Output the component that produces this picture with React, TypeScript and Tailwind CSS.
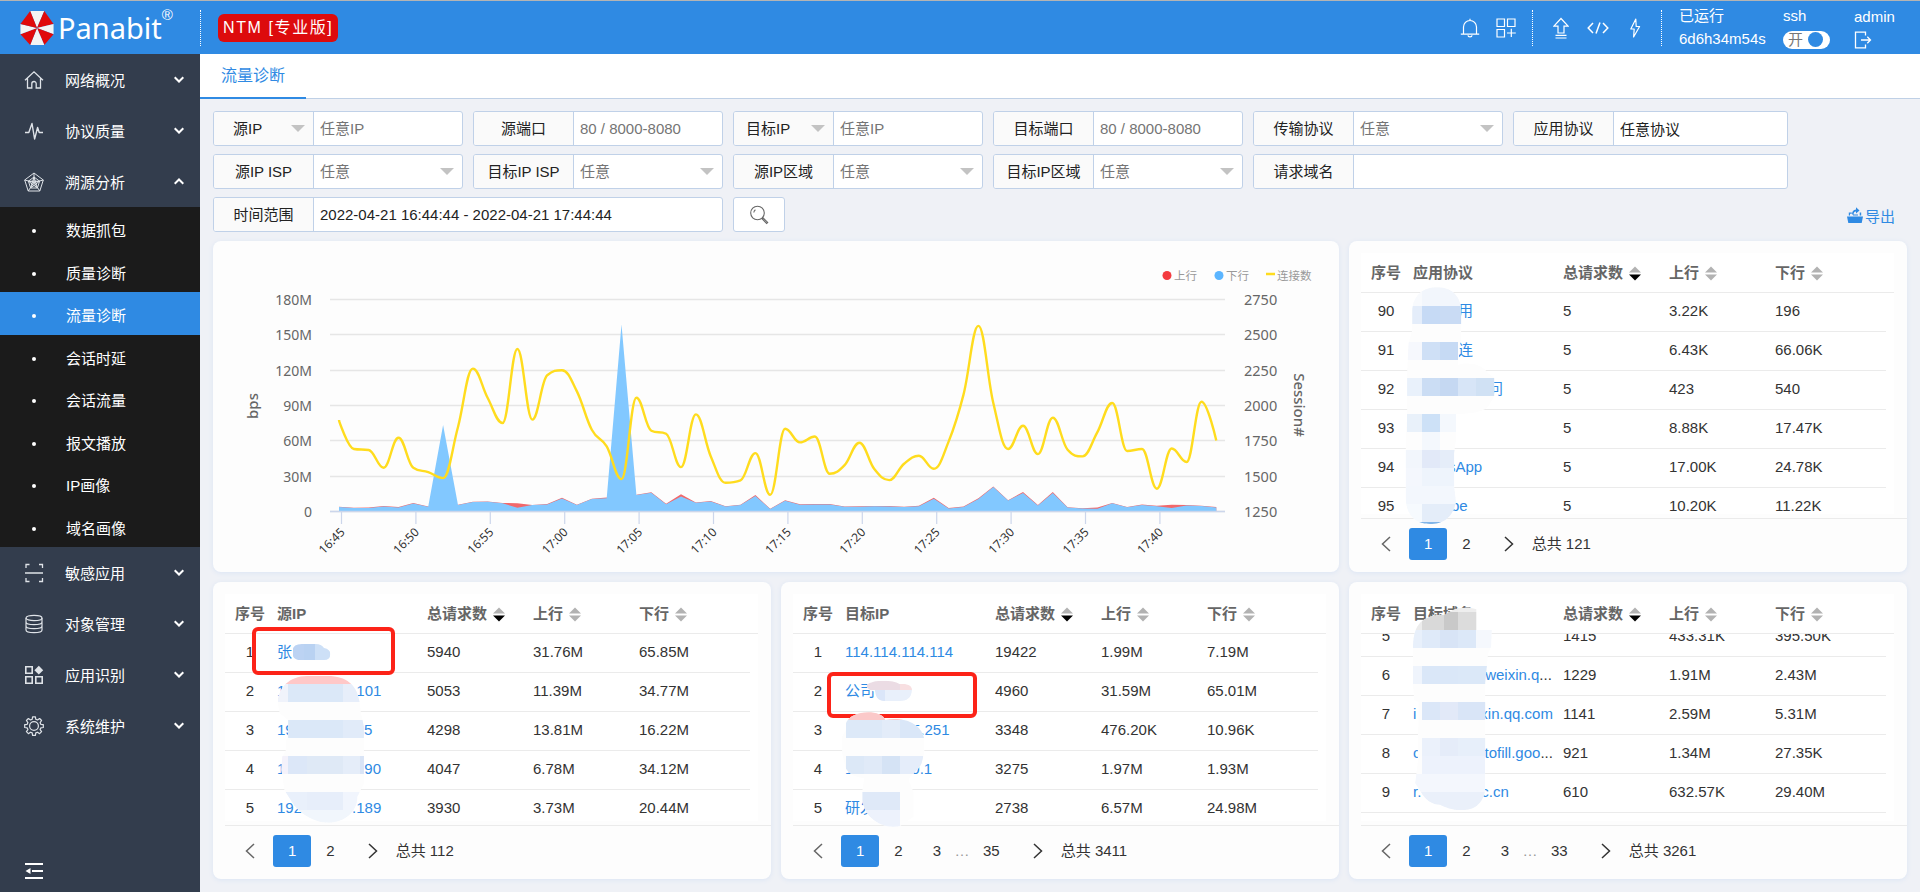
import { useEffect, useRef, type ReactNode } from 'react';

/* ---------- icons ---------- */

const line = { fill: 'none', stroke: 'currentColor' } as const;

function Logo() {
  const v = ['11,1', '25.5,1', '35,14.5', '35,25', '25.5,36', '11,36', '1,25', '1,14.5'];
  const fills = ['#f4f4f4', '#e0090b', '#f4f4f4', '#e0090b', '#f4f4f4', '#e0090b', '#f4f4f4', '#e0090b'];
  return (
    <svg viewBox="0 0 36 37" className="h-9 w-9" aria-hidden="true">
      {v.map((p, i) => (
        <polygon key={p} points={`18,18.5 ${p} ${v[(i + 1) % 8]}`} fill={fills[i]} />
      ))}
    </svg>
  );
}

const HomeIcon = () => (
  <svg viewBox="0 0 20 20" className="h-5 w-5" {...line} strokeWidth="1.3">
    <path d="M1 10.2 10 1.8l9 8.4M3.5 8.5V18h4.3v-4.3a2.2 2.2 0 0 1 4.4 0V18h4.3V8.5" />
  </svg>
);
const PulseIcon = () => (
  <svg viewBox="0 0 20 20" className="h-5 w-5" {...line} strokeWidth="1.4" strokeLinejoin="round">
    <path d="M1 11.5h3.8L8 2.5l2.6 15.5 3-11.5 1.6 5H19" />
  </svg>
);
const RadarIcon = () => (
  <svg viewBox="0 0 20 20" className="h-5 w-5" {...line} strokeWidth="1">
    <path d="M10 1 19.3 8 15.8 19H4.2L.7 8z" />
    <path d="M10 5 15.6 9.2 13.4 16H6.6L4.4 9.2z" />
    <path d="M10 1v9.5L.7 8M10 10.5 19.3 8M10 10.5 4.2 19M10 10.5l5.8 8.5M4.4 9.2h11.2M10 5l3.4 11-9-6.8M10 5 6.6 16l9-6.8" />
  </svg>
);
const ScanIcon = () => (
  <svg viewBox="0 0 20 20" className="h-5 w-5" {...line} strokeWidth="1.3">
    <path d="M2 5V1.5h3.5M15 1.5h3.5V5M18.500 15v3.500H15M5.500 18.500H2V15M1 10h18" />
  </svg>
);
const DatabaseIcon = () => (
  <svg viewBox="0 0 20 20" className="h-5 w-5" {...line} strokeWidth="1.2">
    <ellipse cx="10" cy="4" rx="8" ry="2.600" />
    <path d="M2 4v12c0 1.500 3.600 2.600 8 2.600s8-1.100 8-2.600V4M2 8c0 1.500 3.600 2.600 8 2.600S18 9.500 18 8M2 12c0 1.500 3.600 2.600 8 2.600s8-1.100 8-2.600" />
  </svg>
);
const AppsIcon = () => (
  <svg viewBox="0 0 20 20" className="h-5 w-5" {...line} strokeWidth="1.6">
    <path d="M1.800 1.800h6.400v6.400H1.800zM1.800 11.800h6.400v6.400H1.800zM11.800 11.800h6.400v6.400h-6.400z" />
    <path d="m14.800.8 4.400 4.400-4.400 4.400-4.400-4.400z" fill="currentColor" stroke="none" />
  </svg>
);
const GearIcon = () => (
  <svg viewBox="0 0 20 20" className="h-5 w-5" {...line} strokeWidth="1.200" strokeLinejoin="round">
    <circle cx="10" cy="10" r="4.400" />
    <path d="M8.600.8h2.800l.4 2.500 1.700.7 2.100-1.500 2 2-1.500 2.100.7 1.700 2.500.4v2.800l-2.500.4-.7 1.700 1.500 2.100-2 2-2.100-1.500-1.700.7-.4 2.500H8.600l-.4-2.500-1.700-.7-2.100 1.500-2-2 1.500-2.100-.7-1.700-2.500-.4V8.700l2.500-.4.7-1.700-1.500-2.100 2-2L6.500 4l1.700-.7z" />
  </svg>
);
const Chevron = ({ up }: { up?: boolean }) => (
  <svg viewBox="0 0 10 7" className="h-[7px] w-[10px]" {...line} strokeWidth="2">
    <path d={up ? 'M.7 5.800 5 1.500l4.300 4.300' : 'M.7 1.200 5 5.500l4.300-4.300'} />
  </svg>
);
const CollapseIcon = () => (
  <svg viewBox="0 0 18 16" className="h-4 w-[18px]" fill="currentColor">
    <path d="M0 0h18v2H0zM7 7h11v2H7zM0 14h18v2H0zM.5 8 5.500 5v6z" />
  </svg>
);
const BellIcon = () => (
  <svg viewBox="0 0 20 20" className="h-5 w-5" {...line} strokeWidth="1.200">
    <path d="M.8 16.200h18.400M3.500 16V9a6.500 6.500 0 0 1 13 0v7M10 2.500V.8M8 17.200a2 1.600 0 0 0 4 0" />
  </svg>
);
const WidgetsIcon = () => (
  <svg viewBox="0 0 20 20" className="h-5 w-5" {...line} strokeWidth="1.200">
    <path d="M1 1h7.500v7.500H1zM11.500 1H19v7.500h-7.500zM1 11.500h7.500V19H1zM15.300 10.800V19M11 15h8.800" />
  </svg>
);
const UploadIcon = () => (
  <svg viewBox="0 0 16 22" className="h-[22px] w-4" {...line} strokeWidth="1.200">
    <path d="M8 1.500.9 9.200H5V16h6V9.200h4.100zM2.500 18.300h11M2.500 21h11" />
  </svg>
);
const CodeIcon = () => (
  <svg viewBox="0 0 22 14" className="h-[14px] w-[22px]" {...line} strokeWidth="1.500">
    <path d="M6 2 1.200 7 6 12M16 2l4.800 5L16 12M13 1.500 9 12.500" />
  </svg>
);
const BoltIcon = () => (
  <svg viewBox="0 0 12 20" className="h-5 w-3" {...line} strokeWidth="1.200" strokeLinejoin="round">
    <path d="M6.800 1 1.800 11h3.400L4.600 19l6-10.500H7.200z" />
  </svg>
);
const LogoutIcon = () => (
  <svg viewBox="0 0 18 18" className="h-[18px] w-[18px]" {...line} strokeWidth="1.300">
    <path d="M11.500 4.500V1.200H1.500v15.600h10v-3.300M7 9h9.500M13.300 5.800 16.500 9l-3.200 3.200" />
  </svg>
);
const SearchIcon = () => (
  <svg viewBox="0 0 20 20" className="h-5 w-5" fill="none" stroke="#666" strokeWidth="1.100">
    <circle cx="8.500" cy="8" r="6.800" />
    <path d="M4.800 7.500a4 4 0 0 1 1.600-2.800M13 13.700l1-.9 4.700 4.600-1.100 1.100z" />
  </svg>
);
const ExportIcon = () => (
  <svg viewBox="0 0 16 16" className="h-4 w-4" fill="currentColor" aria-hidden="true">
    <path d="M0 9.500h16l-1.300 6.500H1.300zM1.800 8.500V5.500h3v1.200H3v1.800zM14.200 8.500V5.500h-1.500v3zM5 7.500c0-3 1.300-4.700 4-5V.3l3.500 3.200L9 6.500V4.600c-1.700.1-2.300 1.100-2.500 2.900zM6 8.500V7.400h5v1.100z" />
  </svg>
);

/* ---------- header ---------- */

const Divider = () => <span className="h-9 border-l border-dotted border-white" />;

function Header() {
  return (
    <header className="flex h-[54px] items-center border-t border-[#b4b4b4] bg-[#2f8ae3] text-white">
      <div className="flex w-[200px] items-center pl-[19px]">
        <Logo />
        <span className="pl-[3px] font-['Noto_Sans',sans-serif] text-[29px] leading-9">Panabit</span>
        <span className="self-start text-[15px] leading-[10px]">®</span>
      </div>
      <Divider />
      <span className="ml-[17px] flex h-7 items-center rounded-md bg-[#dd0b0d] px-[5px] text-[16px] tracking-widest">
        NTM [专业版]
      </span>
      <div className="ml-auto flex items-center">
        <button type="button" aria-label="通知"><BellIcon /></button>
        <button type="button" aria-label="组件" className="mr-4 ml-4"><WidgetsIcon /></button>
        <Divider />
        <button type="button" aria-label="升级" className="ml-5"><UploadIcon /></button>
        <button type="button" aria-label="代码" className="ml-[18px]"><CodeIcon /></button>
        <button type="button" aria-label="快捷" className="mr-5 ml-5"><BoltIcon /></button>
        <Divider />
        <div className="ml-[17px] w-[104px] pb-0.5 text-[15px] leading-[23px]">
          <div>已运行</div>
          <div>6d6h34m54s</div>
        </div>
        <div className="w-[71px] pb-0.5 text-[15px] leading-[22px]">
          <div id="ssh-label">ssh</div>
          <button
            type="button"
            role="switch"
            aria-checked="true"
            aria-labelledby="ssh-label"
            className="mt-1 flex h-[18px] w-[47px] items-center rounded-full bg-white pl-[5px] text-[15px] leading-[18px] text-[#777]"
          >
            开
            <span className="ml-[5px] h-[15px] w-[15px] rounded-full bg-[#2f8ae3]" />
          </button>
        </div>
        <div className="w-[66px] pb-0.5 text-[15px] leading-6">
          <div>admin</div>
          <button type="button" aria-label="退出" className="mt-0.5 block"><LogoutIcon /></button>
        </div>
      </div>
    </header>
  );
}

/* ---------- sidebar ---------- */

const subItems = ['数据抓包', '质量诊断', '流量诊断', '会话时延', '会话流量', '报文播放', 'IP画像', '域名画像'];

function MenuItem({ icon, label, open }: { icon: ReactNode; label: string; open?: boolean }) {
  return (
    <button type="button" aria-expanded={!!open} className="flex h-[51px] w-full items-center pr-4 pl-6 text-left text-[15px] text-white">
      <span className="text-[#dfe3e8]">{icon}</span>
      <span className="flex-1 pt-1 pl-[21px]">{label}</span>
      <Chevron up={open} />
    </button>
  );
}

function Sidebar() {
  return (
    <nav className="flex w-[200px] shrink-0 flex-col bg-[#333d4d]">
      <MenuItem icon={<HomeIcon />} label="网络概况" />
      <MenuItem icon={<PulseIcon />} label="协议质量" />
      <MenuItem icon={<RadarIcon />} label="溯源分析" open />
      <ul className="grid h-[340px] auto-rows-fr bg-[#1b1b1b] text-[15px] text-white">
        {subItems.map((s) => (
          <li key={s} className={s === '流量诊断' ? 'flex bg-[#2f8ae3]' : 'flex'}>
            <a href="#" className="flex flex-1 items-center pt-1.5 pl-8">
              <span className="h-1 w-1 rounded-full bg-white" />
              <span className="pl-[30px]">{s}</span>
            </a>
          </li>
        ))}
      </ul>
      <MenuItem icon={<ScanIcon />} label="敏感应用" />
      <MenuItem icon={<DatabaseIcon />} label="对象管理" />
      <MenuItem icon={<AppsIcon />} label="应用识别" />
      <MenuItem icon={<GearIcon />} label="系统维护" />
      <button type="button" aria-label="收起菜单" className="mt-auto mb-[13px] ml-[25px] self-start text-white">
        <CollapseIcon />
      </button>
    </nav>
  );
}

/* ---------- filters ---------- */

const Caret = () => (
  <svg viewBox="0 0 14 7" className="pointer-events-none absolute top-[13px] right-2 h-[7px] w-[14px]" aria-hidden="true">
    <path d="M0 0h14L7 7z" fill="#c3c3c3" />
  </svg>
);

type FieldProps = {
  id: string;
  label: string;
  wide?: string;
  labelSelect?: boolean;
  placeholder?: string;
  value?: string;
  select?: boolean;
};

function Field({ id, label, wide = 'w-[250px]', labelSelect, placeholder, value, select }: FieldProps) {
  return (
    <div className={`flex h-[35px] overflow-hidden rounded-[3px] border border-[#c0d1e8] bg-white text-[15px] ${wide}`}>
      {labelSelect ? (
        <div className="relative w-[100px] shrink-0 border-r border-[#c0d1e8] bg-[#fafafa]">
          <select aria-label={label} className={`h-full w-full appearance-none bg-transparent pt-0.5 outline-none ${label === '源IP' ? 'pl-[19px]' : 'pl-3'}`}>
            <option>{label}</option>
          </select>
          <Caret />
        </div>
      ) : (
        <label htmlFor={id} className="flex w-[100px] shrink-0 items-center justify-center border-r border-[#c0d1e8] bg-[#fafafa] pt-0.5 whitespace-nowrap">
          {label}
        </label>
      )}
      <div className="relative flex-1">
        {select ? (
          <>
            <select id={id} className="h-full w-full appearance-none bg-transparent pt-0.5 pl-1.5 text-[#757575] outline-none">
              <option>任意</option>
            </select>
            <Caret />
          </>
        ) : (
          <input
            id={id}
            aria-label={labelSelect ? `${label}地址` : undefined}
            className="h-full w-full bg-transparent pl-1.5 outline-none placeholder:text-[#757575]"
            placeholder={placeholder}
            defaultValue={value}
          />
        )}
      </div>
    </div>
  );
}

function Filters() {
  return (
    <form className="flex flex-col gap-2 text-[#222]">
      <div className="flex gap-2.5">
        <Field id="src-ip" label="源IP" labelSelect placeholder="任意IP" />
        <Field id="src-port" label="源端口" placeholder="80 / 8000-8080" />
        <Field id="dst-ip" label="目标IP" labelSelect placeholder="任意IP" />
        <Field id="dst-port" label="目标端口" placeholder="80 / 8000-8080" />
        <Field id="proto" label="传输协议" select />
        <Field id="app" label="应用协议" value="任意协议" wide="w-[275px]" />
      </div>
      <div className="flex gap-2.5">
        <Field id="src-isp" label="源IP ISP" select />
        <Field id="dst-isp" label="目标IP ISP" select />
        <Field id="src-area" label="源IP区域" select />
        <Field id="dst-area" label="目标IP区域" select />
        <Field id="domain" label="请求域名" wide="w-[535px]" />
      </div>
      <div className="flex items-center gap-2.5">
        <Field id="range" label="时间范围" value="2022-04-21 16:44:44 - 2022-04-21 17:44:44" wide="w-[510px]" />
        <button type="button" aria-label="查询" className="flex h-[35px] w-[52px] items-center justify-center rounded-[3px] border border-[#c0d1e8] bg-white">
          <SearchIcon />
        </button>
        <a href="#" className="mr-3 ml-auto flex gap-0.5 pt-1 text-[15px] leading-5 text-[#2f8ae3]">
          <ExportIcon />
          导出
        </a>
      </div>
    </form>
  );
}

/* ---------- chart ---------- */

const sessions = [
  1897, 1692, 1685, 1559, 1772, 1559, 1529, 1486, 1848, 2261, 2053, 1876, 2400, 1900, 2214, 2249, 2100, 1829, 1711, 1479,
  2055, 1822, 1800, 1564, 1937, 1640, 1453, 1470, 1663, 1368, 1836, 1739, 1781, 1517, 1578, 1737, 1550, 1472, 1588, 1644,
  1552, 1746, 2077, 2563, 2018, 1692, 1857, 1656, 1914, 1687, 1640, 1812, 2018, 1678, 1692, 1411, 1696, 1600, 2027, 1753,
];
const down = [
  3.7, 2.9, 3, 4.3, 3.4, 6.8, 4, 73.4, 5.4, 8, 8.3, 7, 3.1, 5.4, 6, 11, 5.4, 10.5, 11.2, 158.7,
  14, 16, 6.2, 12.8, 7.4, 8.6, 4.2, 5.5, 13.2, 2, 9.2, 5.8, 6, 6, 4, 4.1, 4.4, 4.3, 3.7, 4.5,
  10.8, 2.6, 3.9, 10.5, 20.8, 9.3, 15.8, 5.2, 15.8, 3.3, 2.5, 2.4, 7, 3.6, 5.6, 4.4, 3, 5.1, 4.6, 3.4,
];
const upPeaks: Record<number, number> = {
  7: 6, 12: 7, 13: 5.6, 15: 11.6, 18: 11.9, 19: 6, 23: 14.6, 28: 14, 40: 11.6, 43: 11.2, 46: 16.6, 48: 16.6, 51: 3.4, 55: 4.8, 56: 5.8,
};
const up = down.map((d, i) => upPeaks[i] ?? d + 0.3);

const X0 = 126;
const STEP = 14.87;
const BASE = 270.5;
const TOP = 58.5;
const px = (i: number) => X0 + STEP * i;
const py = (m: number) => BASE - (m / 180) * (BASE - TOP);
const sy = (s: number) => BASE - ((s - 1250) / 1500) * (BASE - TOP);

const area = (d: number[]) =>
  `M${px(0)} ${BASE}` + d.map((v, i) => `L${px(i).toFixed(1)} ${py(v).toFixed(1)}`).join('') + `L${px(d.length - 1)} ${BASE}Z`;

/* Spline whose control points never overshoot the neighbouring values. */
function spline(pts: [number, number][]) {
  const k = 1.5;
  let out = `M${pts[0][0]} ${pts[0][1]}`;
  let prev = pts[0];
  for (let i = 1; i < pts.length; i++) {
    const [x, y] = pts[i];
    const [lx, ly] = pts[i - 1];
    let left: [number, number] = [x, y];
    let right: [number, number] = [x, y];
    if (i < pts.length - 1) {
      const [nx, ny] = pts[i + 1];
      left = [(k * x + lx) / (k + 1), (k * y + ly) / (k + 1)];
      right = [(k * x + nx) / (k + 1), (k * y + ny) / (k + 1)];
      const corr = ((right[1] - left[1]) * (right[0] - x)) / (right[0] - left[0]) + y - right[1];
      left[1] += corr;
      right[1] += corr;
      if (left[1] > ly && left[1] > y) {
        left[1] = Math.max(ly, y);
        right[1] = 2 * y - left[1];
      } else if (left[1] < ly && left[1] < y) {
        left[1] = Math.min(ly, y);
        right[1] = 2 * y - left[1];
      }
      if (right[1] > ny && right[1] > y) {
        right[1] = Math.max(ny, y);
        left[1] = 2 * y - right[1];
      } else if (right[1] < ny && right[1] < y) {
        right[1] = Math.min(ny, y);
        left[1] = 2 * y - right[1];
      }
    }
    out += `C${[prev[0], prev[1], left[0], left[1], x, y].map((n) => n.toFixed(1)).join(' ')}`;
    prev = right;
  }
  return out;
}

const leftTicks = ['180M', '150M', '120M', '90M', '60M', '30M', '0'];
const rightTicks = ['2750', '2500', '2250', '2000', '1750', '1500', '1250'];
const times = ['16:45', '16:50', '16:55', '17:00', '17:05', '17:10', '17:15', '17:20', '17:25', '17:30', '17:35', '17:40'];

function Chart() {
  const gy = (i: number) => Math.floor(TOP + ((BASE - TOP) / 6) * i) + 0.5;
  return (
    <svg viewBox="0 0 1126 331" className="block h-auto w-full font-['Noto_Sans','Noto_Sans_CJK_SC',sans-serif]" role="img" aria-label="流量趋势">
      {leftTicks.map((t, i) => (
        <g key={t}>
          <path d={`M117 ${gy(i)}H1012`} stroke="#e6e6e6" strokeWidth="1.500" />
          <text x="99" y={gy(i) + 5.500} textAnchor="end" fontSize="14" fill="#666">{t}</text>
          <text x="1031" y={gy(i) + 5.500} fontSize="14.500" fill="#666">{rightTicks[i]}</text>
        </g>
      ))}
      <path d={area(up)} fill="#f2686b" />
      <path d={area(down)} fill="#82c8ff" />
      {times.map((t, i) => {
        const x = 128.5 + 74.4 * i;
        return (
          <g key={t}>
            <path d={`M${x} 271v12`} stroke="#ccd6eb" strokeWidth="1.200" />
            <text transform={`translate(${x + 4} 292) rotate(-45)`} textAnchor="end" fontSize="12" fill="#333">{t}</text>
          </g>
        );
      })}
      <path d={`M117 ${BASE}H1012`} stroke="#ccd6eb" strokeWidth="1.500" />
      <path d={spline(sessions.map((s, i) => [px(i), sy(s)]))} fill="none" stroke="#ffdc1e" strokeWidth="2.400" strokeLinejoin="round" />
      <text transform="translate(45 165) rotate(-90)" textAnchor="middle" fontSize="15" fill="#666" fontWeight="500">bps</text>
      <text transform="translate(1081 164) rotate(90)" textAnchor="middle" fontSize="15" fill="#666" fontWeight="500">Session#</text>
      <g fontSize="11.500" fill="#999">
        <circle cx="954" cy="34.500" r="4.500" fill="#f43b3f" />
        <text x="961" y="38.500">上行</text>
        <circle cx="1006" cy="34.500" r="4.500" fill="#5bb5ff" />
        <text x="1013" y="38.500">下行</text>
        <path d="M1053 33h9" stroke="#ffdc1e" strokeWidth="2.500" />
        <text x="1064" y="38.500">连接数</text>
      </g>
    </svg>
  );
}

/* ---------- tables ---------- */

type Part = string | number; // a string is text, a number is a gap in pixels
type Row = { no: string; name: Part[]; more?: boolean; n: string; up: string; down: string };

function Sort({ active }: { active?: boolean }) {
  return (
    <svg viewBox="0 0 12 15" className="h-[15px] w-3" aria-hidden="true">
      <path d="M0 6.500 6 .5l6 6z" fill="#b2b2b2" />
      <path d="M0 8.500h12l-6 6z" fill={active ? '#000' : '#b2b2b2'} />
    </svg>
  );
}

function DataTable({ title, rows, bodyClass, scroll = 0 }: { title: string; rows: Row[]; bodyClass: string; scroll?: number }) {
  const pane = useRef<HTMLDivElement>(null);
  useEffect(() => {
    if (pane.current) pane.current.scrollTop = scroll;
  }, [scroll]);
  const th = 'sticky top-0 z-10 h-10 border-b border-[#ebebeb] bg-white px-0.5 pt-0.5 text-left font-bold text-[#666]';
  const td = 'h-[39px] border-b border-[#ebebeb] px-0.5 pb-0.5';
  return (
    <div ref={pane} className={`overflow-y-auto [scrollbar-width:none] ${bodyClass}`}>
      <table className="w-full table-fixed border-separate border-spacing-0 bg-white text-[15px] text-[#333]">
        <colgroup>
          <col className="w-[50px]" />
          <col className="w-[150px]" />
          <col className="w-[106px]" />
          <col className="w-[106px]" />
          <col />
          <col className="w-2" />
        </colgroup>
        <thead>
          <tr>
            <th className="sticky top-0 z-10 h-10 border-b border-[#ebebeb] bg-white pt-0.5 text-center font-bold text-[#666]">序号</th>
            <th className={th}>{title}</th>
            <th className={th}><span className="flex items-center gap-1.5">总请求数<Sort active /></span></th>
            <th className={th}><span className="flex items-center gap-1.5">上行<Sort /></span></th>
            <th className={th} colSpan={2}><span className="flex items-center gap-1.5">下行<Sort /></span></th>
          </tr>
        </thead>
        <tbody>
          {rows.map((r) => (
            <tr key={r.no}>
              <td className="h-[39px] border-b border-[#ebebeb] pb-0.5 text-center">{r.no}</td>
              <td className={td}>
                <div className="flex items-center whitespace-nowrap">
                  <a href="#" className="flex text-[#2f8ae3]">
                    {r.name.map((p, i) =>
                      typeof p === 'number' ? <span key={i} style={{ width: p }} /> : <span key={i}>{p}</span>,
                    )}
                  </a>
                  {r.more && <span>...</span>}
                </div>
              </td>
              <td className={td}>{r.n}</td>
              <td className={td}>{r.up}</td>
              <td className={td}>{r.down}</td>
              <td />
            </tr>
          ))}
          {scroll > 0 && <tr><td colSpan={6} className="h-[39px]" /></tr>}
        </tbody>
      </table>
    </div>
  );
}

function Pager({ pages, total }: { pages: string[]; total: string }) {
  return (
    <div className="mt-1 ml-3 flex items-center border-t border-[#ebebeb] pt-[9px] pb-3 pl-0.5 text-[15px] text-[#333]">
      <button type="button" aria-label="上一页" className="flex h-8 w-[46px] items-center justify-center">
        <svg viewBox="0 0 10 16" className="h-4 w-2.5" fill="none" stroke="#666" strokeWidth="1.500"><path d="M9 1 1.500 8 9 15" /></svg>
      </button>
      {pages.map((p) =>
        p === '…' ? (
          <span key={p} className="flex w-3 justify-center text-[#999]">{p}</span>
        ) : (
          <button key={p} type="button" className={`h-8 px-[15px] ${p === '1' ? 'rounded-[3px] bg-[#2f8ae3] text-white' : ''}`}>{p}</button>
        ),
      )}
      <button type="button" aria-label="下一页" className="flex h-8 w-[46px] items-center justify-center">
        <svg viewBox="0 0 10 16" className="h-4 w-2.5" fill="none" stroke="#333" strokeWidth="1.500"><path d="M1 1l7.500 7L1 15" /></svg>
      </button>
      <span>总共 {total}</span>
    </div>
  );
}

/* Redaction mosaics: a rounded outline filled with flat tiles [x, y, width, height, colour]. */
type Tile = [number, number, number, number, string];
function Mosaic({ id, box, size, outline, tiles }: { id: string; box: string; size: string; outline: string; tiles: Tile[] }) {
  return (
    <svg viewBox={box} preserveAspectRatio="none" className={`pointer-events-none absolute top-0 left-0 z-20 ${size}`} aria-hidden="true">
      <clipPath id={id}><path d={outline} /></clipPath>
      <g clipPath={`url(#${id})`} shapeRendering="crispEdges">
        <rect x="0" y="0" width="700" height="1000" fill="#fdfdfd" />
        {tiles.map((t, i) => (
          <rect key={i} x={t[0]} y={t[1]} width={t[2]} height={t[3]} fill={t[4]} />
        ))}
      </g>
    </svg>
  );
}

const appMosaic: Tile[] = [
  [180, 140, 42, 58, '#f8fafd'], [222, 140, 110, 58, '#f2f6fc'],
  [190, 198, 32, 54, '#e4edfa'], [222, 198, 48, 54, '#c6daf5'], [270, 198, 60, 54, '#c9dbf4'],
  [180, 306, 42, 54, '#f6f8fd'], [222, 306, 48, 54, '#cfe0f6'], [270, 306, 48, 54, '#c6daf4'],
  [180, 414, 42, 54, '#e9f1fb'], [222, 414, 48, 54, '#cbddf4'], [270, 414, 49, 54, '#c5d8f2'], [319, 414, 49, 54, '#d7e5f7'], [368, 414, 50, 54, '#d0e1f4'],
  [180, 522, 42, 54, '#e9f1fa'], [222, 522, 48, 54, '#cde1f7'], [270, 522, 48, 54, '#f4f8fd'],
  [222, 576, 48, 54, '#f4f8fd'],
  [170, 630, 52, 54, '#f2f6fc'], [222, 630, 48, 54, '#e2e9f8'], [270, 630, 48, 54, '#e5edf9'],
  [170, 684, 52, 54, '#f4f7fd'], [222, 684, 100, 54, '#eef4fc'],
  [170, 738, 150, 54, '#f3f7fd'],
  [170, 792, 52, 54, '#f6fafe'], [222, 792, 100, 54, '#e4edf9'], [170, 846, 150, 8, '#7fb4e8'],
];
const srcMosaic: Tile[] = [
  [200, 316, 240, 26, '#ffc8c8'],
  [200, 342, 38, 54, '#f0f3fb'], [238, 342, 147, 54, '#dbe8f8'], [385, 342, 60, 54, '#e7eefa'],
  [238, 450, 147, 54, '#dbe8f8'], [385, 450, 60, 54, '#e1ebf9'],
  [200, 558, 38, 54, '#f4f2fb'], [238, 558, 50, 54, '#dce7f8'], [288, 558, 97, 54, '#dfe9f6'], [385, 558, 48, 54, '#e5edf9'], [433, 558, 12, 54, '#d9e4f6'],
  [220, 666, 68, 54, '#e9f0fb'], [288, 666, 97, 54, '#e7eefa'], [385, 666, 60, 54, '#f1f5fd'],
  [220, 720, 220, 40, '#f1f6fc'],
];
const dstMosaic: Tile[] = [
  [190, 420, 240, 30, '#fbc9c9'],
  [205, 450, 98, 54, '#dde9f8'], [303, 450, 48, 54, '#e3ecf9'], [351, 450, 70, 54, '#dae7f8'],
  [205, 558, 48, 54, '#dce8f7'], [253, 558, 50, 54, '#e0eaf8'], [303, 558, 48, 54, '#d5e3f5'], [351, 558, 64, 54, '#e5edfa'],
  [250, 666, 102, 54, '#dfe9f8'], [250, 720, 102, 54, '#edf2fc'],
];
const domainMosaic: Tile[] = [
  [190, 110, 130, 70, '#ececec'], [319, 110, 60, 16, '#eeeeee'],
  [222, 126, 58, 54, '#d9d9d9'], [280, 126, 39, 54, '#c9c9c9'], [319, 126, 50, 54, '#dcdcdc'],
  [190, 180, 32, 54, '#e8f0fb'], [222, 180, 48, 54, '#dfeaf9'], [270, 180, 49, 54, '#d8e4f6'], [319, 180, 49, 54, '#dce8f8'], [368, 180, 45, 54, '#f5f8fd'],
  [190, 288, 32, 54, '#eff4fc'], [222, 288, 97, 54, '#dae7f8'], [319, 288, 80, 54, '#dbe8f8'],
  [222, 396, 48, 54, '#dbe7f8'], [270, 396, 49, 54, '#e2e9f8'], [319, 396, 75, 54, '#d9e5f7'],
  [222, 504, 48, 54, '#ebf1fb'], [270, 504, 49, 54, '#e5ecf9'], [319, 504, 75, 54, '#e7effa'],
  [222, 558, 170, 54, '#edf2fc'], [200, 612, 192, 54, '#f4f7fd'], [200, 666, 192, 56, '#eaf0fa'],
];

const appRows: Row[] = [
  { no: '90', name: [45, '用'], n: '5', up: '3.22K', down: '196' },
  { no: '91', name: [45, '连'], n: '5', up: '6.43K', down: '66.06K' },
  { no: '92', name: [75, '问'], n: '5', up: '423', down: '540' },
  { no: '93', name: [], n: '5', up: '8.88K', down: '17.47K' },
  { no: '94', name: [35, 'sApp'], n: '5', up: '17.00K', down: '24.78K' },
  { no: '95', name: [38, 'be'], n: '5', up: '10.20K', down: '11.22K' },
];
const srcRows: Row[] = [
  { no: '1', name: ['张'], n: '5940', up: '31.76M', down: '65.85M' },
  { no: '2', name: ['1', 71, '101'], n: '5053', up: '11.39M', down: '34.77M' },
  { no: '3', name: ['19', 62, '35'], n: '4298', up: '13.81M', down: '16.22M' },
  { no: '4', name: ['1', 79, '90'], n: '4047', up: '6.78M', down: '34.12M' },
  { no: '5', name: ['192', 50, '.189'], n: '3930', up: '3.73M', down: '20.44M' },
];
const dstRows: Row[] = [
  { no: '1', name: ['114.114.114.114'], n: '19422', up: '1.99M', down: '7.19M' },
  { no: '2', name: ['公司'], n: '4960', up: '31.59M', down: '65.01M' },
  { no: '3', name: [67, '5.251'], n: '3348', up: '476.20K', down: '10.96K' },
  { no: '4', name: ['1', 58, '0.1'], n: '3275', up: '1.97M', down: '1.93M' },
  { no: '5', name: ['研发'], n: '2738', up: '6.57M', down: '24.98M' },
];
const domainRows: Row[] = [
  { no: '5', name: [], n: '1415', up: '433.31K', down: '395.50K' },
  { no: '6', name: [68, '.weixin.q'], more: true, n: '1229', up: '1.91M', down: '2.43M' },
  { no: '7', name: ['i', 64, 'xin.qq.com'], n: '1141', up: '2.59M', down: '5.31M' },
  { no: '8', name: ['c', 64, 'tofill.goo'], more: true, n: '921', up: '1.34M', down: '27.35K' },
  { no: '9', name: ['r.', 60, 'c.cn'], n: '610', up: '632.57K', down: '29.40M' },
];

const card = 'relative rounded-lg bg-[#fdfdfd] shadow-[0_1px_5px_#dbe5f4]';
const tableWrap = 'pt-3 pr-[13px] pl-3';

export default function App() {
  return (
    <div className="flex min-h-screen flex-col bg-[#eff1f6] font-['Liberation_Sans','Noto_Sans_CJK_SC',sans-serif]">
      <Header />
      <div className="flex flex-1">
        <Sidebar />
        <main className="min-w-0 flex-1">
          <div className="flex h-[45px] border-b border-[#bfd0e6] bg-white">
            <a href="#" className="-mb-px flex w-[106px] items-center justify-center border-b-2 border-[#2f8ae3] text-[16px] text-[#2f8ae3]">
              流量诊断
            </a>
          </div>
          <div className="px-[13px] pt-3 pb-3">
            <Filters />
            <div className="mt-[9px] grid grid-cols-3 gap-2.5">
              <section className={`${card} col-span-2`}>
                <Chart />
              </section>
              <section className={card}>
                <div className={tableWrap}><DataTable title="应用协议" rows={appRows} bodyClass="h-[261px]" /></div>
                <Pager pages={['1', '2']} total="121" />
                <Mosaic
                  id="m-app"
                  box="24 3 1508 993"
                  size="h-[331px] w-[558px]"
                  outline="M195 210C198 165 225 142 262 142S325 165 327 210V290L318 375C345 365 385 372 400 400L417 414V468L400 500C385 518 340 522 313 522V600L308 640V740L313 785C305 835 275 852 243 852S180 835 177 775V600L181 522V400L185 310L195 270Z"
                  tiles={appMosaic}
                />
              </section>
              <section className={card}>
                <div className={tableWrap}><DataTable title="源IP" rows={srcRows} bodyClass="h-[227px]" /></div>
                <Pager pages={['1', '2']} total="112" />
                <div className="absolute top-[45px] left-[39px] z-20 h-12 w-[143px] rounded-md border-4 border-[#fc2318]" />
                <Mosaic
                  id="m-src-a"
                  box="35 36 1508 891"
                  size="h-[297px] w-[558px]"
                  outline="M250 240Q252 222 275 222H312Q328 222 335 234Q352 238 352 252Q352 270 335 270H265Q250 266 250 252Z"
                  tiles={[[250, 222, 30, 60, '#bcd3f3'], [280, 222, 32, 60, '#b9d2f2'], [312, 222, 45, 60, '#cde0f7']]}
                />
                <Mosaic
                  id="m-src-b"
                  box="35 36 1508 891"
                  size="h-[297px] w-[558px]"
                  outline="M210 396C212 355 240 318 290 318H345C395 318 425 345 431 396L435 430L443 470V640L425 680C425 730 385 758 345 758C310 758 265 730 245 690L228 660L220 600L222 560L232 540V510L238 504V450L215 430Z"
                  tiles={srcMosaic}
                />
              </section>
              <section className={card}>
                <div className={tableWrap}><DataTable title="目标IP" rows={dstRows} bodyClass="h-[227px]" /></div>
                <Pager pages={['1', '2', '3', '…', '35']} total="3411" />
                <div className="absolute top-[90px] left-[46px] z-20 h-[46px] w-[150px] rounded-md border-4 border-[#fc2318]" />
                <Mosaic
                  id="m-dst-a"
                  box="30 36 1508 891"
                  size="h-[297px] w-[558px]"
                  outline="M262 345C275 330 330 328 350 342C375 340 384 348 384 360C382 385 370 393 350 393H310C290 393 285 375 285 365C270 362 260 355 262 345Z"
                  tiles={[[255, 325, 97, 35, '#ebdce4'], [352, 325, 40, 35, '#f8dfe1'], [285, 360, 26, 40, '#dbe6f9'], [311, 360, 80, 40, '#e9f0fb']]}
                />
                <Mosaic
                  id="m-dst-b"
                  box="30 36 1508 891"
                  size="h-[297px] w-[558px]"
                  outline="M205 462C215 420 300 415 312 450C355 440 410 455 418 510V545L410 580C400 605 380 612 375 630L388 666V740L352 768C300 780 255 740 250 690V660L255 625C235 622 215 615 205 595L195 550V500L205 480Z"
                  tiles={dstMosaic}
                />
              </section>
              <section className={card}>
                <div className={tableWrap}><DataTable title="目标域名" rows={domainRows} bodyClass="h-[227px]" scroll={16} /></div>
                <Pager pages={['1', '2', '3', '…', '33']} total="3261" />
                <Mosaic
                  id="m-domain"
                  box="24 36 1508 891"
                  size="h-[297px] w-[558px]"
                  outline="M197 234C198 175 210 135 285 134C305 115 335 108 368 118V180H410L408 230L400 250L392 340V660C385 705 360 720 330 720C300 720 285 712 270 704C250 704 230 690 218 665L203 640L210 575V500L212 460V396L200 390L197 342Z"
                  tiles={domainMosaic}
                />
              </section>
            </div>
          </div>
        </main>
      </div>
    </div>
  );
}
